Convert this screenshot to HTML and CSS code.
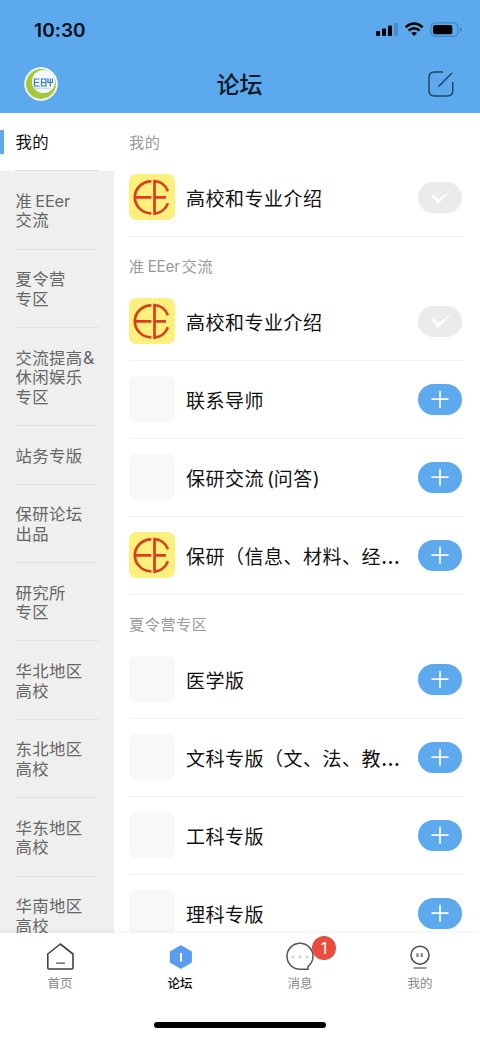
FILE: index.html
```html
<!DOCTYPE html>
<html lang="zh-CN">
<head>
<meta charset="utf-8">
<title>论坛</title>
<link rel="stylesheet" href="styles.css">
</head>
<body>
<svg class="defs" width="0" height="0">
  <symbol id="logo" viewBox="0 0 46 46">
    <rect width="46" height="46" rx="7" fill="#fdf07c"/>
    <g fill="none" stroke="#dc3d1c" stroke-width="2.7">
      <path d="M22.400 7.300A16.600 16 0 0 0 22.400 39.300M7 23.300H22.400M25.500 5.800V41M25.500 23.300H37M25 7.200C31 7.200 36.500 11 38.900 17.200M25 39.400C31 39.400 36.500 35.400 38.900 29.200"/>
    </g>
  </symbol>
  <symbol id="plus" viewBox="0 0 44 31"><path d="M13.5 15.2H30.5M22 6.7V23.7" stroke="#fff" stroke-width="1.7"/></symbol>
  <symbol id="check" viewBox="0 0 44 31"><path d="M13.4 13.4L20 21.8L34 7.5L20.2 17.3L15.2 12.2Z" fill="#fff"/></symbol>
</svg>
<div class="app">
  <header class="header">
    <div class="status">
      <span class="time">10:30</span>
      <svg width="86" height="18" viewBox="0 0 86 18">
        <rect x="0" y="10" width="4" height="5" rx="1"/><rect x="6" y="7.5" width="4" height="7.5" rx="1"/><rect x="12" y="4.5" width="4" height="10.5" rx="1"/><rect x="18" y="2" width="4" height="13" rx="1" fill="#4a8cc9"/>
        <g fill="none" stroke="#000" stroke-width="2.6"><path d="M29.6 6.3Q38.1 -1.3 46.6 6.3"/><path d="M32.6 9.6Q38.1 4.9 43.6 9.6"/></g>
        <path d="M35.2 12Q38.1 9.8 41 12L38.1 15Z"/>
        <rect x="54.9" y="1.9" width="27" height="13.4" rx="4" fill="none" stroke="#3b7dba"/>
        <rect x="57" y="4" width="19.3" height="9.2" rx="2"/><path d="M84 6.3v4.6q1.8-.8 1.8-2.3T84 6.3" fill="#3b7dba"/>
      </svg>
    </div>
    <div class="nav">
      <svg width="34" height="34" viewBox="0 0 34 34">
        <circle cx="17" cy="17" r="16.7" fill="#fff"/><circle cx="17" cy="17" r="15" fill="#a2c937"/><circle cx="19.5" cy="14.5" r="11.6" fill="#f3f8f8"/>
        <g fill="none" stroke="#347cc4" stroke-width="1.2"><path d="M15.500 12h-5v7H15.500M10.500 15.500H15M17.500 12h4.500v7h-4.500zM17.500 15.500h4.500M24 11.500v4h4.500v-4M26.250 11.500V19.600"/></g>
        <path d="M11 21.200h16" stroke="#80b0c9" stroke-width=".8" stroke-dasharray="2 1"/>
      </svg>
      <h1 class="title">论坛</h1>
      <svg class="compose" width="28" height="28" viewBox="0 0 28 28" fill="none" stroke="#23455f" stroke-width="1.5"><path d="M16 2H7.5Q2 2 2 7.5v13Q2 26 7.5 26H20q5.800 0 5.800-5.500V12M11.300 16.700L25 3"/></svg>
    </div>
  </header>
  <main class="content">
    <nav class="side">
      <a class="cat active">我的</a>
      <a class="cat">准<span class="gap">EEer</span><br>交流</a>
      <a class="cat">夏令营<br>专区</a>
      <a class="cat">交流提高<span class="amp">&amp;</span><br>休闲娱乐<br>专区</a>
      <a class="cat">站务专版</a>
      <a class="cat">保研论坛<br>出品</a>
      <a class="cat">研究所<br>专区</a>
      <a class="cat">华北地区<br>高校</a>
      <a class="cat">东北地区<br>高校</a>
      <a class="cat">华东地区<br>高校</a>
      <a class="cat">华南地区<br>高校</a>
    </nav>
    <section class="boards">
      <h2 class="group">我的</h2>
      <div class="row"><svg class="thumb"><use href="#logo"/></svg><span class="name">高校和专业介绍</span><svg class="btn done"><use href="#check"/></svg></div>
      <h2 class="group">准<span class="gap both">EEer</span>交流</h2>
      <div class="row"><svg class="thumb"><use href="#logo"/></svg><span class="name">高校和专业介绍</span><svg class="btn done"><use href="#check"/></svg></div>
      <div class="row"><span class="thumb"></span><span class="name">联系导师</span><svg class="btn"><use href="#plus"/></svg></div>
      <div class="row"><span class="thumb"></span><span class="name">保研交流<span class="gap">(</span>问答)</span><svg class="btn"><use href="#plus"/></svg></div>
      <div class="row"><svg class="thumb"><use href="#logo"/></svg><span class="name">保研（信息、材料、经<span class="dots">…</span></span><svg class="btn"><use href="#plus"/></svg></div>
      <h2 class="group">夏令营专区</h2>
      <div class="row"><span class="thumb"></span><span class="name">医学版</span><svg class="btn"><use href="#plus"/></svg></div>
      <div class="row"><span class="thumb"></span><span class="name">文科专版（文、法、教<span class="dots">…</span></span><svg class="btn"><use href="#plus"/></svg></div>
      <div class="row"><span class="thumb"></span><span class="name">工科专版</span><svg class="btn"><use href="#plus"/></svg></div>
      <div class="row"><span class="thumb"></span><span class="name">理科专版</span><svg class="btn"><use href="#plus"/></svg></div>
    </section>
  </main>
  <footer class="footer">
    <div class="tabs">
      <a class="tab"><svg width="30" height="30" viewBox="0 0 30 30" fill="none" stroke="#3f4042" stroke-width="1.6" stroke-linejoin="round"><path d="M15.300 2L28 12V25.800Q28 27 26.800 27H4Q2.800 27 2.800 25.800V12Z"/><path d="M11.200 21.200h8.700" stroke="#777"/></svg>首页</a>
      <a class="tab current"><svg width="30" height="30" viewBox="0 0 30 30"><path d="M15.800 4.800L25.400 10.200V19.800L15.800 25.200L6.300 19.800V10.200Z" fill="#5b9bf0" stroke="#5b9bf0" stroke-width="3" stroke-linejoin="round"/><path d="M16 11v8.500" stroke="#fff" stroke-width="2"/></svg>论坛</a>
      <a class="tab"><svg width="30" height="30" viewBox="0 0 30 30"><path d="M23 27.300H15A13 13 0 1 1 28 14.300Q28 20.500 23 24.500Z" fill="none" stroke="#555" stroke-width="1.500"/><g fill="#ddd6d8"><circle cx="8" cy="15" r="1.700"/><circle cx="15" cy="15" r="1.700"/><circle cx="22" cy="15" r="1.700"/></g></svg>消息<span class="badge">1</span></a>
      <a class="tab"><svg width="30" height="30" viewBox="0 0 30 30" fill="none" stroke="#484848" stroke-width="1.500"><circle cx="15" cy="13.200" r="9"/><path d="M12.500 11.300v3.600M16.700 11.300v3.600" stroke="#777" stroke-width="2"/><path d="M8.500 26h13" stroke="#777"/></svg>我的</a>
    </div>
    <div class="home-bar"></div>
  </footer>
</div>
</body>
</html>
```
FILE: styles.css
```css
* { box-sizing: border-box; }
body { margin: 0; font-family: Inter, "Noto Sans CJK SC", sans-serif; background: #fff; color: #111; text-autospace: no-autospace; }
.defs { display: block; position: absolute; }
.app { width: 480px; height: 1039px; display: flex; flex-direction: column; overflow: hidden; }
.header { height: 112.5px; flex: none; background: #5ca9ed; }
.status { height: 56px; padding: 4px 18px 0 34px; display: flex; align-items: center; justify-content: space-between; }
.time { font-size: 19px; font-weight: 600; color: #040d16; letter-spacing: .1px; }
.nav { height: 56px; padding: 0 25px 0 24px; display: grid; grid-template-columns: 1fr auto 1fr; align-items: center; }
.title { margin: 0; padding-top: 2px; font-size: 23px; font-weight: 500; line-height: 34px; color: #0b1a27; }
.compose { justify-self: end; }
.content { flex: 1; min-height: 0; display: flex; overflow: hidden; }
.side { width: 114px; flex: none; background: #efefef; }
.cat { display: block; position: relative; padding: 20.6px 0 18.6px 15.5px; font-size: 16.4px; letter-spacing: .35px; line-height: 19.6px; color: #666; white-space: nowrap; }
.cat::after { content: ""; position: absolute; left: 15px; right: 15px; bottom: 0; height: 1px; background: #e3e3e3; }
.active { background: #fff; color: #111; height: 58.7px; padding-top: 20px; }
.active::before { content: ""; position: absolute; left: 0; top: 17px; width: 4px; height: 24px; background: #5ca9ed; }
.gap { margin-left: 3px; letter-spacing: -.2px; }
.both { margin-right: 2px; }
.amp { font-size: 17.500px; line-height: 1; margin-left: .5px; }
.boards { flex: 1; min-width: 0; padding: 0 16px 0 15px; }
.group { margin: 0; height: 46px; padding-top: 18px; font-size: 15.2px; letter-spacing: .5px; font-weight: 400; line-height: 24px; color: #999; }
.row { height: 78px; display: flex; align-items: center; padding-right: 2px; border-bottom: 1px solid #f0f0f0; }
.thumb { width: 46px; height: 46px; flex: none; border-radius: 7px; background: #f8f8f8; }
.name { flex: 1; margin-left: 11px; padding-top: 5px; font-size: 19px; letter-spacing: .5px; line-height: 28px; white-space: nowrap; }
.dots { font-size: 22px; line-height: 1; }
.btn { width: 44px; height: 31px; flex: none; border-radius: 16px; background: #5ca9ed; }
.done { background: #ebebeb; }
.footer { height: 106px; flex: none; background: #fff; box-shadow: 0 -1px 5px rgba(0,0,0,.06); position: relative; }
.tabs { display: flex; height: 89px; padding-top: 9px; }
.tab { flex: 1; position: relative; display: flex; flex-direction: column; align-items: center; font-size: 12.500px; line-height: 24px; color: #888; }
.current { color: #111; font-weight: 500; }
.badge { position: absolute; left: 72px; top: -6px; width: 24px; height: 24px; border-radius: 50%; background: #e84d3d; color: #fff; font-size: 16px; line-height: 24px; text-align: center; }
.home-bar { width: 172px; height: 6px; margin: 0 auto; border-radius: 3px; background: #000; }
```
